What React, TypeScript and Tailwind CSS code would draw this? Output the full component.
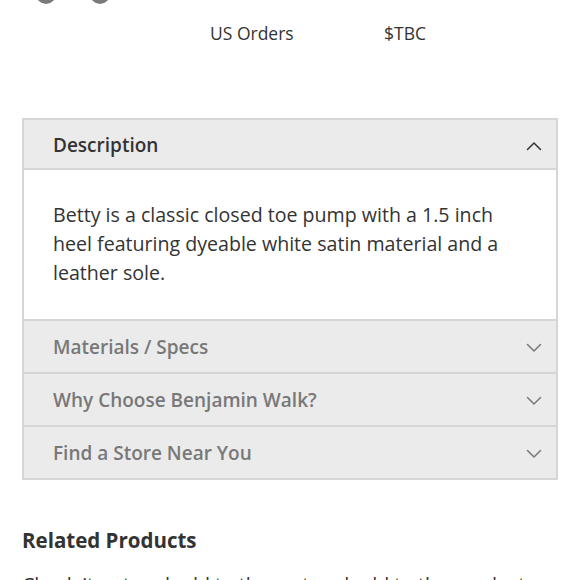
import React from 'react';

const Chevron: React.FC<{ up?: boolean; color: string }> = ({ up, color }) => (
  <svg width="16" height="10" viewBox="0 0 16 10" fill="none" className="shrink-0">
    <path
      d={up ? 'M1.5 8.5 L8 2 L14.5 8.5' : 'M1.5 1.5 L8 8 L14.5 1.5'}
      stroke={color}
      strokeWidth="1.5"
      strokeLinecap="round"
      strokeLinejoin="round"
    />
  </svg>
);

const closedSections = ['Materials / Specs', 'Why Choose Benjamin Walk?', 'Find a Store Near You'];

const App: React.FC = () => {
  return (
    <div className="w-[580px] h-[580px] overflow-hidden bg-white font-['Open_Sans',sans-serif]">
      {/* Swatches (scrolled off the top) */}
      <div className="flex gap-[34px] pl-[36px] -mt-[16px] h-[20px]">
        <div className="size-[20px] rounded-full bg-[#7a7a7a]"></div>
        <div className="size-[20px] rounded-full bg-[#7a7a7a]"></div>
      </div>

      {/* Price row */}
      <div className="flex mt-[17px] pl-[210px] text-[17.5px] leading-[25px] text-[#333]">
        <span className="w-[174px]">US Orders</span>
        <span>$TBC</span>
      </div>

      {/* Accordion */}
      <div className="mx-[22px] mt-[72px] border-2 border-[#d6d6d6]">
        <div className="flex items-center justify-between h-[50px] pt-[3px] pl-[29px] pr-[14px] bg-[#ebebeb] border-b-2 border-[#d6d6d6]">
          <span className="text-[19px] font-semibold text-[#333]">Description</span>
          <Chevron up color="#333" />
        </div>
        <div className="bg-white pl-[29px] pr-[26px] pt-[30px] pb-[32px] text-[19.6px] leading-[29px] text-[#333]">
          Betty is a classic closed toe pump with a 1.5 inch heel featuring dyeable white satin material and a leather sole.
        </div>
        {closedSections.map((title) => (
          <div
            key={title}
            className="flex items-center justify-between h-[53px] pt-[2px] pl-[29px] pr-[14px] bg-[#ebebeb] border-t-2 border-[#d6d6d6]"
          >
            <span className="text-[19px] font-semibold text-[#787878]">{title}</span>
            <Chevron color="#787878" />
          </div>
        ))}
      </div>

      {/* Related */}
      <h2 className="mt-[46px] px-[22px] text-[20.5px] leading-[28px] font-bold text-[#333]">Related Products</h2>
      <p className="mt-[16px] px-[22px] text-[19.6px] leading-[29px] text-[#333]">
        Check it out and add to the cart and add to the products you'll love as well.
      </p>
    </div>
  );
};

export default App;
